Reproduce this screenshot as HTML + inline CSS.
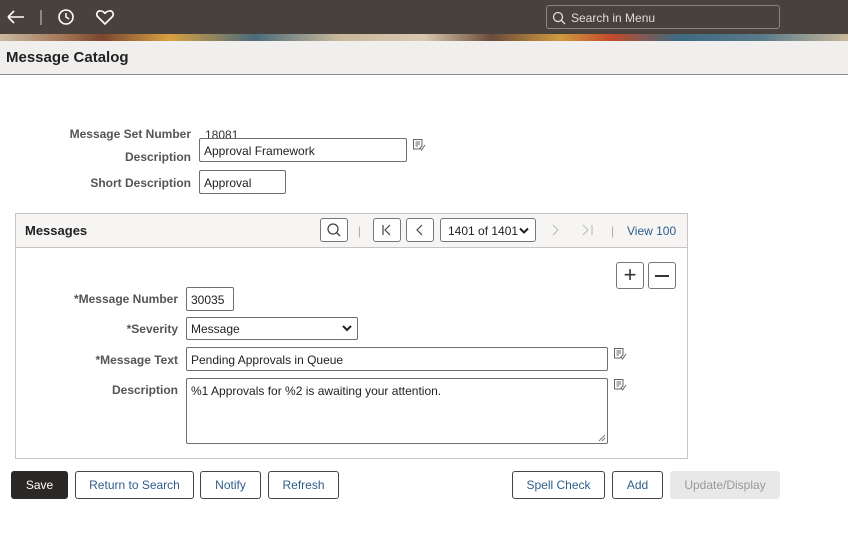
<!DOCTYPE html>
<html><head><style>
*{box-sizing:border-box}
body{margin:0;width:848px;height:543px;background:#fff;font-family:"Liberation Sans",Arial,sans-serif;font-size:12px;color:#333;position:relative;overflow:hidden}
.abs{position:absolute}
.top{left:0;top:0;width:848px;height:34px;background:#49423c}
.strip{left:0;top:34px;width:848px;height:7px;background:linear-gradient(90deg,#c9b9a0 0,#a07050 8%,#7a4630 12%,#d9a040 20%,#4a6a7a 30%,#c8b89a 40%,#d8c8b0 50%,#6a4a3a 58%,#d09a40 66%,#c44a2a 72%,#3d6a80 80%,#5a7a8a 90%,#c8b89a 100%)}
.title{left:0;top:41px;width:848px;height:34px;background:#f0efed;border-bottom:1px solid #8a8a8a}
.title span{position:absolute;left:6px;top:8px;font-size:15px;font-weight:bold;color:#222}
.search{left:546px;top:5px;width:234px;height:24px;border:1px solid #8a8580;border-radius:3px;color:#ddd;font-size:12px;padding:5px 0 0 24px}
.lbl{text-align:right;color:#555;font-weight:bold;font-size:12px}
.inp{border:1px solid #6f6f6f;border-radius:2px;background:#fff;padding:5px 4px;font-size:12px;color:#222}
.btn{border:1px solid #444;border-radius:3px;background:#fff;color:#2f5d8a;text-align:center;font-size:12px;height:28px;line-height:26px}
.ib{border:1px solid #777;border-radius:3px;background:#fff;text-align:center}
</style></head><body>
<div class="abs top"></div>
<svg class="abs" style="left:6px;top:8px" width="110" height="20" viewBox="0 0 110 20">
<path d="M2 9H18M2 9L8 3M2 9L8 15" stroke="#fff" stroke-width="1.6" fill="none"/>
<line x1="35" y1="2" x2="35" y2="17" stroke="#ccc"/>
<circle cx="60" cy="9" r="7" stroke="#fff" stroke-width="1.6" fill="none"/><path d="M60 5V9L63 11" stroke="#fff" stroke-width="1.5" fill="none"/>
<path d="M99 16L92 9C89 6 92 2 95 3C97 3 99 5 99 6C99 5 101 3 103 3C106 2 109 6 106 9Z" stroke="#fff" stroke-width="1.6" fill="none"/>
</svg>
<div class="abs search">Search in Menu</div>
<svg class="abs" style="left:552px;top:11px" width="14" height="14"><circle cx="6" cy="6" r="4.5" stroke="#ddd" stroke-width="1.3" fill="none"/><path d="M9 9L13 13" stroke="#ddd" stroke-width="1.3"/></svg>
<div class="abs strip"></div>
<div class="abs title"><span>Message Catalog</span></div>

<div class="abs lbl" style="left:40px;top:127px;width:151px">Message Set Number</div>
<div class="abs" style="left:205px;top:128px;color:#333">18081</div>
<div class="abs lbl" style="left:40px;top:150px;width:151px">Description</div>
<div class="abs inp" style="left:199px;top:138px;width:208px;height:24px">Approval Framework</div>
<svg class="abs" style="left:412px;top:138px" width="14" height="14"><path d="M1.5 1.5H10V8L7 11H1.5Z M3.5 4H8M3.5 6H8M3.5 8H6M8 10L9.5 12L13 7" stroke="#666" fill="none"/></svg>
<div class="abs lbl" style="left:40px;top:176px;width:151px">Short Description</div>
<div class="abs inp" style="left:199px;top:170px;width:87px;height:24px">Approval</div>

<div class="abs" style="left:15px;top:213px;width:673px;height:246px;border:1px solid #c5c5c5"></div>
<div class="abs" style="left:16px;top:214px;width:671px;height:34px;background:#f6f5f4;border-bottom:1px solid #c5c5c5"></div>
<div class="abs" style="left:25px;top:223px;font-size:13px;font-weight:bold;color:#222">Messages</div>
<div class="abs ib" style="left:320px;top:218px;width:28px;height:24px"><svg width="16" height="16" style="margin-top:3px"><circle cx="7" cy="7" r="5" stroke="#444" stroke-width="1.3" fill="none"/><path d="M10.5 10.5L14 14" stroke="#444" stroke-width="1.3"/></svg></div>
<div class="abs" style="left:358px;top:224px;color:#aaa">|</div>
<div class="abs ib" style="left:373px;top:218px;width:28px;height:24px"><svg width="14" height="14" style="margin-top:4px"><path d="M3 2V12M10 2L5 7L10 12" stroke="#444" stroke-width="1.2" fill="none"/></svg></div>
<div class="abs ib" style="left:406px;top:218px;width:28px;height:24px"><svg width="14" height="14" style="margin-top:4px"><path d="M9 2L4 7L9 12" stroke="#444" stroke-width="1.2" fill="none"/></svg></div>
<div class="abs ib" style="left:440px;top:218px;width:96px;height:24px;text-align:left;padding:5px 0 0 7px;color:#222">1401 of 1401<svg style="position:absolute;right:6px;top:8px" width="10" height="8"><path d="M1 1.5L5 5.5L9 1.5" stroke="#222" stroke-width="2" fill="none"/></svg></div>
<svg class="abs" style="left:550px;top:223px;" width="50" height="14"><path d="M3 2L8 7L3 12M33 2L38 7L33 12M42 2V12" stroke="#bbb" stroke-width="1.1" fill="none"/></svg>
<div class="abs" style="left:611px;top:224px;color:#aaa">|</div>
<div class="abs" style="left:627px;top:224px;color:#2f5d8a">View 100</div>
<div class="abs ib" style="left:616px;top:262px;width:28px;height:27px;font-size:22px;line-height:24px;color:#333">+</div>
<div class="abs ib" style="left:648px;top:262px;width:28px;height:27px"><div style="margin:12px auto 0;width:14px;height:1.5px;background:#333"></div></div>

<div class="abs lbl" style="left:30px;top:292px;width:148px">*Message Number</div>
<div class="abs inp" style="left:186px;top:287px;width:48px;height:24px">30035</div>
<div class="abs lbl" style="left:30px;top:322px;width:148px">*Severity</div>
<div class="abs inp" style="left:186px;top:317px;width:172px;height:23px;padding-top:4px">Message<svg style="position:absolute;right:5px;top:7px" width="10" height="8"><path d="M1 1L5 5L9 1" stroke="#222" stroke-width="2" fill="none"/></svg></div>
<div class="abs lbl" style="left:30px;top:353px;width:148px">*Message Text</div>
<div class="abs inp" style="left:186px;top:347px;width:422px;height:24px">Pending Approvals in Queue</div>
<div class="abs lbl" style="left:30px;top:383px;width:148px">Description</div>
<div class="abs inp" style="left:186px;top:378px;width:422px;height:66px">%1 Approvals for %2 is awaiting your attention.<svg style="position:absolute;right:1px;bottom:1px" width="8" height="8"><path d="M7 1L1 7M7 4L4 7" stroke="#777"/></svg></div>
<svg class="abs" style="left:613px;top:347px" width="14" height="14"><path d="M1.5 1.5H10V8L7 11H1.5Z M3.5 4H8M3.5 6H8M3.5 8H6M8 10L9.5 12L13 7" stroke="#666" fill="none"/></svg>
<svg class="abs" style="left:613px;top:378px" width="14" height="14"><path d="M1.5 1.5H10V8L7 11H1.5Z M3.5 4H8M3.5 6H8M3.5 8H6M8 10L9.5 12L13 7" stroke="#666" fill="none"/></svg>

<div class="abs btn" style="left:11px;top:471px;width:57px;background:#2b2825;color:#fff;border-color:#2b2825">Save</div>
<div class="abs btn" style="left:75px;top:471px;width:119px">Return to Search</div>
<div class="abs btn" style="left:200px;top:471px;width:61px">Notify</div>
<div class="abs btn" style="left:268px;top:471px;width:71px">Refresh</div>
<div class="abs btn" style="left:512px;top:471px;width:93px">Spell Check</div>
<div class="abs btn" style="left:612px;top:471px;width:51px">Add</div>
<div class="abs btn" style="left:670px;top:471px;width:110px;background:#e8e8e8;border-color:#e8e8e8;color:#999">Update/Display</div>
</body></html>
